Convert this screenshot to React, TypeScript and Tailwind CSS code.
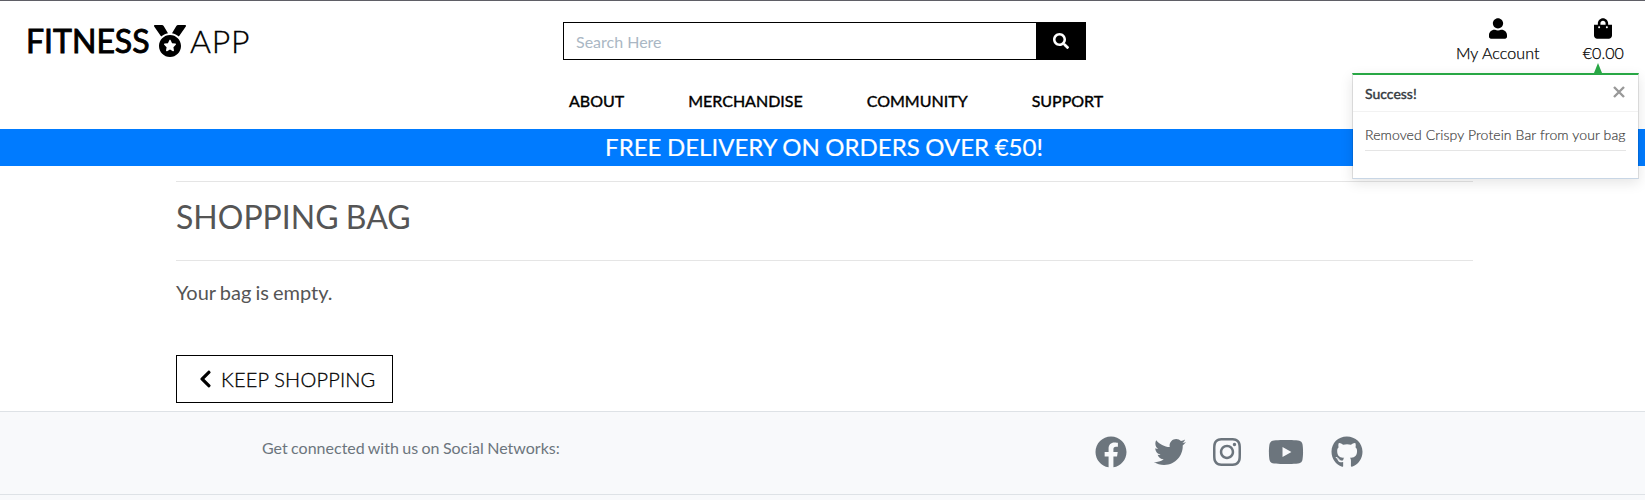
import React from "react";
import {
  FaMedal,
  FaSearch,
  FaUser,
  FaShoppingBag,
  FaChevronLeft,
  FaFacebook,
  FaTwitter,
  FaInstagram,
  FaYoutube,
  FaGithub,
} from "react-icons/fa";

const navLinks = ["ABOUT", "MERCHANDISE", "COMMUNITY", "SUPPORT"];

function Toast() {
  return (
    <div className="absolute top-[63px] right-[6px] w-[287px] text-[14px]">
      <svg className="ml-[242px] block h-[10px] w-[8px]" viewBox="0 0 8 10">
        <path d="M4 0 L8 10 H0 Z" fill="#28a745" />
      </svg>
      <div className="h-[106px] border border-t-2 border-black/10 border-t-[#28a745] border-b-[#c8d6e5] bg-white bg-clip-padding shadow-[0_4px_12px_rgba(0,0,0,0.1)]">
        <div className="flex h-[37px] items-center justify-between border-b border-black/5 pr-[13px] pl-3">
          <span className="leading-[21px] text-[#343a40] [-webkit-text-stroke:0.4px_#343a40]">Success!</span>
          <svg className="-mt-[2px] h-3 w-3" viewBox="0 0 12 12" stroke="#999" strokeWidth="2.4">
            <path d="M1 1 L11 11 M11 1 L1 11" />
          </svg>
        </div>
        <div className="px-3 pt-3">
          <div className="h-[27px] border-b border-black/10 leading-[21px] font-light tracking-[0.1px] whitespace-nowrap text-[#444] [-webkit-text-stroke:0.2px_#444]">
            Removed Crispy Protein Bar from your bag
          </div>
        </div>
      </div>
    </div>
  );
}

export default function App() {
  return (
    <div className="relative flex h-[500px] flex-col overflow-hidden bg-white font-[Lato,sans-serif] text-[#555]">
      <header className="h-[129px] shrink-0 border-t border-[#5f5f66] text-black">
        <div className="flex h-[75px] items-start">
          <a className="flex w-[563px] items-center pt-[21px] pl-[26px] text-[32px] leading-[38px]">
            <span className="w-[123px] [-webkit-text-stroke:0.9px_#000]">FITNESS</span>
            <FaMedal className="ml-[5px] h-8 w-8" />
            <span className="ml-1 font-light tracking-[0.8px] [-webkit-text-stroke:0.3px_#000]">APP</span>
          </a>
          <div className="mt-[21px] flex h-[38px] w-[523px] border border-black">
            <input
              placeholder="Search Here"
              className="min-w-0 flex-1 px-3 pt-px text-[16px] placeholder-[#aab7c4] outline-none"
            />
            <button className="flex w-[49px] items-center justify-center bg-black text-white">
              <FaSearch className="h-4 w-4" />
            </button>
          </div>
          <div className="ml-auto flex gap-[43px] pt-[17px] pr-[21px] font-light tracking-[0.1px] [-webkit-text-stroke:0.25px_#000]">
            <div className="flex flex-col items-center">
              <FaUser className="h-[21px] w-[18px]" />
              <span className="mt-[2px] leading-6">My Account</span>
            </div>
            <div className="flex flex-col items-center">
              <FaShoppingBag className="h-[21px] w-[18px]" />
              <span className="mt-[2px] leading-6">€0.00</span>
            </div>
          </div>
        </div>
        <nav className="flex gap-16 pt-[13px] pl-[569px] leading-6">
          {navLinks.map((l) => (
            <a key={l} className="[-webkit-text-stroke:0.4px_#000]">{l}</a>
          ))}
        </nav>
      </header>

      <div className="h-[37px] shrink-0 bg-[#007bff] pl-[3px] text-center text-[24px] leading-[35px] [word-spacing:-0.6px] text-white [-webkit-text-stroke:0.2px_#fff]">
        FREE DELIVERY ON ORDERS OVER €50!
      </div>

      <main className="mr-[172px] ml-[176px] h-[245px] shrink-0 pt-[15px]">
        <h2 className="h-[80px] border-y border-black/10 pt-[16px] text-[32px] leading-[38px] [word-spacing:-1px]">
          SHOPPING BAG
        </h2>
        <p className="pt-4 text-[20px] leading-[30px] [word-spacing:-1px]">Your bag is empty.</p>
        <button className="mt-12 flex h-[48px] w-[217px] items-center border border-black pl-[22px] text-[20px] text-black">
          <FaChevronLeft className="h-5 w-[13px]" />
          <span className="ml-[9px] font-light tracking-[0.18px] [-webkit-text-stroke:0.3px_#000]">KEEP SHOPPING</span>
        </button>
      </main>

      <footer className="flex-1 bg-[#f8f9fb] text-[#6c757d]">
        <div className="flex h-[84px] justify-between border-y border-[#dee2e6] pr-[282px] pl-[262px]">
          <span className="pt-6 leading-6 [word-spacing:-0.7px]">Get connected with us on Social Networks:</span>
          <div className="flex gap-[27px] pt-6">
            <FaFacebook className="h-8 w-8" />
            <FaTwitter className="h-8 w-8" />
            <FaInstagram className="h-8 w-7" preserveAspectRatio="xMidYMid slice" />
            <FaYoutube className="h-8 w-9" />
            <FaGithub className="h-8 w-8" />
          </div>
        </div>
      </footer>

      <Toast />
    </div>
  );
}
